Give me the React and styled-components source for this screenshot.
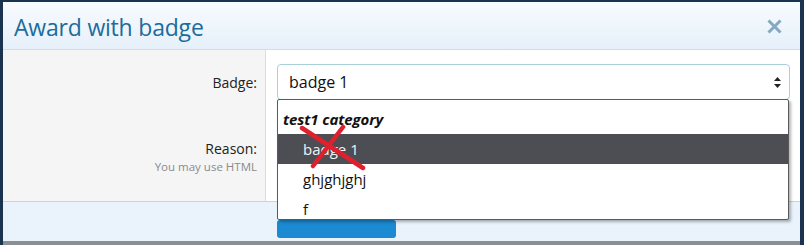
import styled, { createGlobalStyle } from "styled-components";

const Global = createGlobalStyle`
  html, body {
    margin: 0;
    padding: 0;
    background: #0d2740;
    font-family: "Open Sans", "Noto Sans", sans-serif;
  }
`;

const Backdrop = styled.div`
  width: 804px;
  height: 245px;
  padding: 2px 4px 0 3px;
  box-sizing: border-box;
  overflow: hidden;
  background: #1a3450;
`;

const Dialog = styled.div`
  position: relative;
  background: #fff;
  height: 243px;
  box-sizing: border-box;
  display: flex;
  flex-direction: column;
  border-bottom: 4px solid #8a8f94;
`;

const Header = styled.div`
  flex: 0 0 47px;
  display: flex;
  align-items: center;
  justify-content: space-between;
  padding: 0 18px 0 11px;
  background: linear-gradient(to bottom, #f7fbfe, #e6f0fa);
  border-bottom: 1px solid #d3dbe3;
`;

const Title = styled.h2`
  margin: 3px 0 0;
  font-weight: 400;
  font-size: 23px;
  color: #1c6c9c;
  letter-spacing: -0.2px;
`;

const Close = styled.svg`
  display: block;
  margin-top: 2px;
`;

const Body = styled.div`
  flex: 0 0 151px;
  display: grid;
  grid-template-columns: 263px 1fr;
`;

const Labels = styled.div`
  background: #f5f5f5;
  border-right: 1px solid #dcdcdc;
  display: flex;
  flex-direction: column;
  align-items: flex-end;
  padding: 23px 8px 0 0;
`;

const Label = styled.div`
  font-size: 14px;
  color: #222;
  height: ${p => p.$h || 20}px;
`;

const Hint = styled.div`
  font-size: 11.5px;
  color: #8a8a8a;
`;

const Fields = styled.div`
  padding: 14px 10px 0 11px;
`;

const Select = styled.div`
  height: 36px;
  border: 1px solid #a9d0da;
  border-radius: 4px;
  display: flex;
  align-items: center;
  justify-content: space-between;
  padding: 0 8px 0 11px;
  font-size: 16px;
  color: #111;
  box-sizing: border-box;
`;

const Arrows = styled.svg`
  display: block;
`;

const Footer = styled.div`
  flex: 1;
  min-height: 0;
  overflow: hidden;
  background: #eaf3fc;
  border-top: 1px solid #c9d3dd;
  padding: 18px 0 0 274px;
`;

const Button = styled.div`
  width: 119px;
  height: 18px;
  background: #1b8ad2;
  border-radius: 3px;
`;

const Menu = styled.div`
  position: absolute;
  left: 274px;
  top: 97px;
  width: 512px;
  height: 121px;
  background: #fff;
  border: 1px solid #5a5a5a;
  border-radius: 2px;
  box-shadow: 2px 2px 3px rgba(0, 0, 0, 0.3);
  box-sizing: border-box;
  padding-top: 4px;
`;

const Group = styled.div`
  font-size: 15px;
  font-weight: 700;
  font-style: italic;
  color: #111;
  height: 30px;
  line-height: 30px;
  padding-left: 5px;
  letter-spacing: -0.1px;
`;

const Option = styled.div`
  height: 30px;
  line-height: 30px;
  padding-left: 25px;
  font-size: 15px;
  color: ${p => (p.$active ? "#f3f3f3" : "#111")};
  background: ${p => (p.$active ? "#4d4e54" : "transparent")};
`;

const Cross = styled.svg`
  position: absolute;
  left: 296px;
  top: 122px;
  pointer-events: none;
`;

export default function App() {
  return (
    <>
      <Global />
      <Backdrop>
        <Dialog>
          <Header>
            <Title>Award with badge</Title>
            <Close width="15" height="15" viewBox="0 0 15 15">
              <path d="M1.5 1.5 L13.5 13.5 M13.5 1.5 L1.5 13.5" stroke="#85a9c2" strokeWidth="3" />
            </Close>
          </Header>
          <Body>
            <Labels>
              <Label $h={66}>Badge:</Label>
              <Label>Reason:</Label>
              <Hint>You may use HTML</Hint>
            </Labels>
            <Fields>
              <Select>
                badge 1
                <Arrows width="7" height="11" viewBox="0 0 7 11">
                  <path d="M3.5 0 L7 4 L0 4 Z M0 7 L7 7 L3.5 11 Z" fill="#222" />
                </Arrows>
              </Select>
            </Fields>
          </Body>
          <Footer>
            <Button />
          </Footer>
          <Menu>
            <Group>test1 category</Group>
            <Option $active>badge 1</Option>
            <Option>ghjghjghj</Option>
            <Option>f</Option>
          </Menu>
          <Cross width="72" height="50" viewBox="0 0 72 50">
            <path d="M3 4 L64 44" stroke="#e0202c" strokeWidth="4.5" strokeLinecap="round" />
            <path d="M44 3 L14 42" stroke="#e0202c" strokeWidth="4.5" strokeLinecap="round" />
          </Cross>
        </Dialog>
      </Backdrop>
    </>
  );
}
